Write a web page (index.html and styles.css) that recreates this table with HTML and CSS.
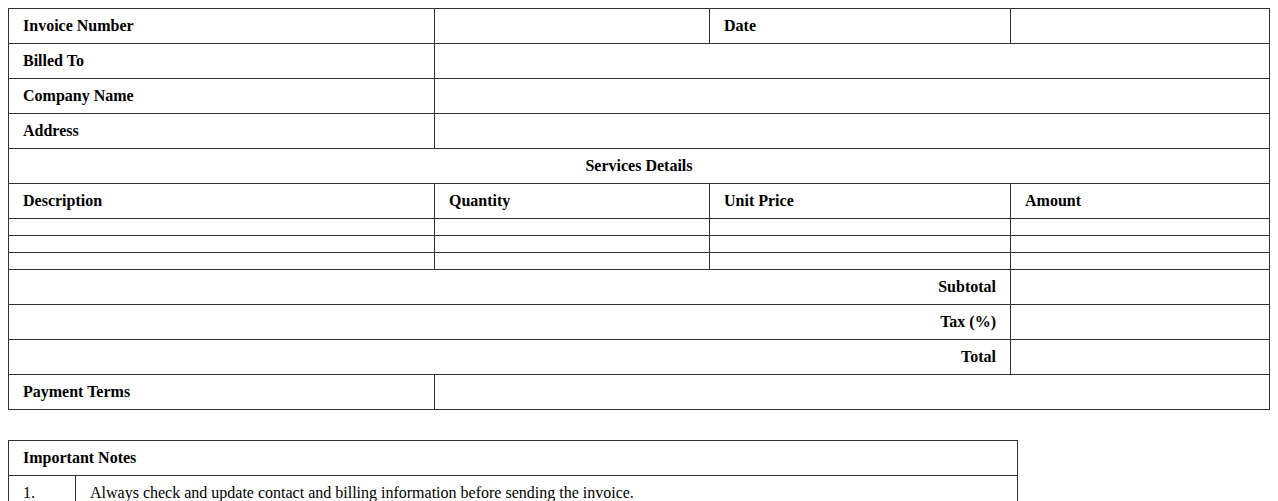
FILE: index.html
```html
<!DOCTYPE html>
<html>
<head>
<meta charset="utf-8">
<link rel="stylesheet" href="styles.css">
</head>
<body>
<table class="invoice">
  <colgroup>
    <col class="c1"><col class="c2"><col class="c3"><col class="c4">
  </colgroup>
  <tr><th>Invoice Number</th><td></td><th>Date</th><td></td></tr>
  <tr><th>Billed To</th><td colspan="3"></td></tr>
  <tr><th>Company Name</th><td colspan="3"></td></tr>
  <tr><th>Address</th><td colspan="3"></td></tr>
  <tr><th colspan="4" class="center">Services Details</th></tr>
  <tr><th>Description</th><th>Quantity</th><th>Unit Price</th><th>Amount</th></tr>
  <tr class="empty"><td></td><td></td><td></td><td></td></tr>
  <tr class="empty"><td></td><td></td><td></td><td></td></tr>
  <tr class="empty"><td></td><td></td><td></td><td></td></tr>
  <tr><th colspan="3" class="right">Subtotal</th><td></td></tr>
  <tr><th colspan="3" class="right">Tax (%)</th><td></td></tr>
  <tr><th colspan="3" class="right">Total</th><td></td></tr>
  <tr><th>Payment Terms</th><td colspan="3"></td></tr>
</table>

<table class="notes">
  <colgroup><col class="n1"><col></colgroup>
  <tr><th colspan="2">Important Notes</th></tr>
  <tr><td>1.</td><td>Always check and update contact and billing information before sending the invoice.</td></tr>
</table>
</body>
</html>
```

FILE: styles.css
```css
html, body {
  background: #fff;
}
body {
  margin: 8px;
  font-family: "Liberation Serif", "Times New Roman", serif;
  font-size: 16px;
  color: #000;
}
table {
  border-collapse: collapse;
  table-layout: fixed;
}
.invoice {
  width: 1262px;
}
.c1 { width: 426px; }
.c2 { width: 275px; }
.c3 { width: 301px; }
th, td {
  border: 1px solid #333;
  padding: 8px 14px;
  text-align: left;
  vertical-align: middle;
  line-height: 18px;
  height: 18px;
}
th {
  font-weight: bold;
}
.empty td {
  height: 0;
  padding: 8px 14px;
  line-height: 0;
}
.center { text-align: center; }
.right { text-align: right; }
.notes {
  width: 1010px;
  margin-top: 30px;
}
.n1 { width: 67px; }
```
